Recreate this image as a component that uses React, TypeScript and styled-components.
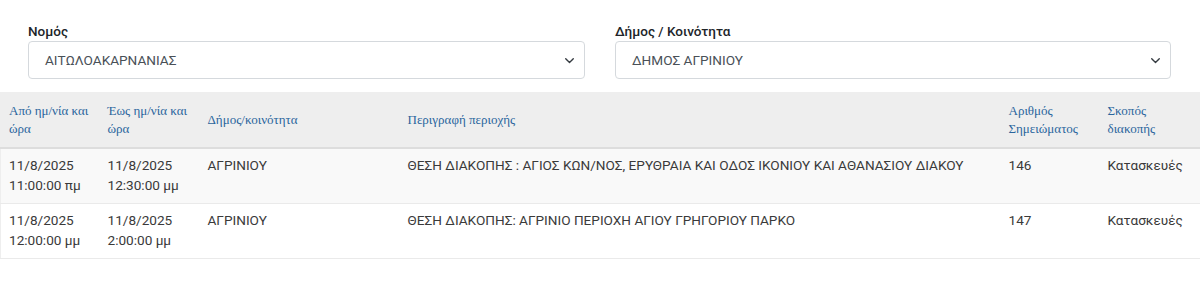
import React from "react";
import styled, { createGlobalStyle } from "styled-components";

type Outage = {
    from: [string, string];
    to: [string, string];
    municipality: string;
    description: string;
    note: string;
    reason: string;
};

const outages: Outage[] = [
    {
        from: ["11/8/2025", "11:00:00 πμ"],
        to: ["11/8/2025", "12:30:00 μμ"],
        municipality: "ΑΓΡΙΝΙΟΥ",
        description: "ΘΕΣΗ ΔΙΑΚΟΠΗΣ : ΑΓΙΟΣ ΚΩΝ/ΝΟΣ, ΕΡΥΘΡΑΙΑ ΚΑΙ ΟΔΟΣ ΙΚΟΝΙΟΥ ΚΑΙ ΑΘΑΝΑΣΙΟΥ ΔΙΑΚΟΥ",
        note: "146",
        reason: "Κατασκευές",
    },
    {
        from: ["11/8/2025", "12:00:00 μμ"],
        to: ["11/8/2025", "2:00:00 μμ"],
        municipality: "ΑΓΡΙΝΙΟΥ",
        description: "ΘΕΣΗ ΔΙΑΚΟΠΗΣ: ΑΓΡΙΝΙΟ ΠΕΡΙΟΧΗ ΑΓΙΟΥ ΓΡΗΓΟΡΙΟΥ ΠΑΡΚΟ",
        note: "147",
        reason: "Κατασκευές",
    },
];

const columns = [
    { label: ["Από ημ/νία και", "ώρα"], width: 99 },
    { label: ["Έως ημ/νία και", "ώρα"], width: 100 },
    { label: ["Δήμος/κοινότητα"], width: 200 },
    { label: ["Περιγραφή περιοχής"], width: 601 },
    { label: ["Αριθμός", "Σημειώματος"], width: 99 },
    { label: ["Σκοπός", "διακοπής"], width: 101 },
];

const Chevron = () => (
    <svg width="11" height="11" viewBox="0 0 16 16" fill="none">
        <path d="M2.5 5.5l5.5 5.5 5.5-5.5" stroke="#343a40" strokeWidth="2" strokeLinecap="round" strokeLinejoin="round" />
    </svg>
);

const App: React.FC = () => {
    return (
        <Page>
            <GlobalStyle />
            <Filters>
                <Field>
                    <Label>Νομός</Label>
                    <Select>
                        <span>ΑΙΤΩΛΟΑΚΑΡΝΑΝΙΑΣ</span>
                        <Chevron />
                    </Select>
                </Field>
                <Field>
                    <Label>Δήμος / Κοινότητα</Label>
                    <Select>
                        <span>ΔΗΜΟΣ ΑΓΡΙΝΙΟΥ</span>
                        <Chevron />
                    </Select>
                </Field>
            </Filters>
            <Table>
                <colgroup>
                    {columns.map((c, i) => (
                        <col key={i} style={{ width: c.width }} />
                    ))}
                </colgroup>
                <thead>
                    <tr>
                        {columns.map((c, i) => (
                            <Th key={i}>
                                {c.label.map((l, j) => (
                                    <div key={j}>{l}</div>
                                ))}
                            </Th>
                        ))}
                    </tr>
                </thead>
                <tbody>
                    {outages.map((o, i) => (
                        <Row key={i} $striped={i % 2 === 0}>
                            <Td>
                                {o.from[0]}
                                <br />
                                {o.from[1]}
                            </Td>
                            <Td>
                                {o.to[0]}
                                <br />
                                {o.to[1]}
                            </Td>
                            <Td>{o.municipality}</Td>
                            <Td>{o.description}</Td>
                            <Td>{o.note}</Td>
                            <Td>{o.reason}</Td>
                        </Row>
                    ))}
                </tbody>
            </Table>
        </Page>
    );
};

const GlobalStyle = createGlobalStyle`
    body {
        margin: 0;
        background: #fff;
        font-family: Roboto, "Noto Sans", sans-serif;
    }
`;

const Page = styled.div`
    width: 1200px;
`;

const Filters = styled.div`
    display: grid;
    grid-template-columns: 557px 556px;
    column-gap: 30px;
    padding: 21px 29px 0 28px;
`;

const Field = styled.div`
    display: flex;
    flex-direction: column;
`;

const Label = styled.label`
    font-size: 13.5px;
    line-height: 20px;
    font-weight: 500;
    color: #212529;
`;

const Select = styled.div`
    height: 38px;
    box-sizing: border-box;
    border: 1px solid #d5d9dd;
    border-radius: 4px;
    display: flex;
    align-items: center;
    justify-content: space-between;
    padding: 0 9px 0 16px;
    font-size: 13.6px;
    color: #495057;
    background: #fff;
`;

const Table = styled.table`
    margin-top: 13px;
    width: 1200px;
    border-collapse: collapse;
    table-layout: fixed;
    border: 1px solid #eee;
`;

const Th = styled.th`
    background: #eeeeee;
    text-align: left;
    vertical-align: middle;
    font-family: "Liberation Serif", "DejaVu Serif", serif;
    font-weight: normal;
    font-size: 13px;
    line-height: 18px;
    color: #2a659d;
    padding: 9px 8px;
    border-bottom: 2px solid #dddddd;
`;

const Row = styled.tr<{ $striped: boolean }>`
    background: ${p => (p.$striped ? "#f9f9f9" : "#fff")};
    border-bottom: 1px solid #eaeaea;
`;

const Td = styled.td`
    vertical-align: top;
    font-size: 13.6px;
    line-height: 20px;
    color: #3a3a3a;
    padding: 6px 8px 8px 8px;
`;

export default App;
